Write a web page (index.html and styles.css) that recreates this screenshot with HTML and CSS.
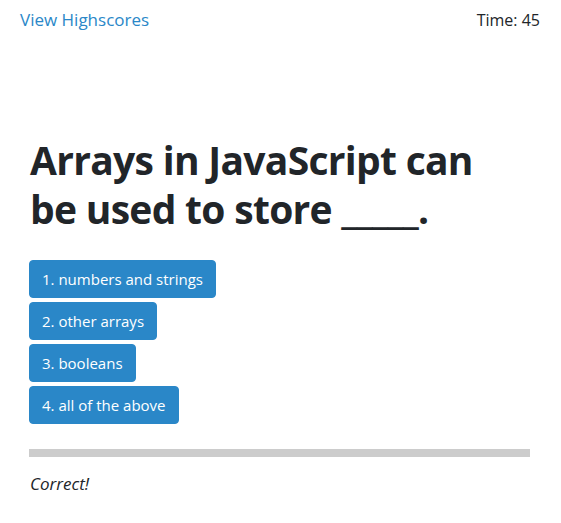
FILE: index.html
```html
<!DOCTYPE html>
<html>
<head>
<meta charset="utf-8">
<link rel="stylesheet" href="styles.css">
</head>
<body>
<header class="topbar">
  <a class="highscores" href="#">View Highscores</a>
  <span class="timer">Time: 45</span>
</header>
<main class="quiz">
  <h1 class="question">Arrays in JavaScript can be used to store _____.</h1>
  <div class="choices">
    <button class="choice">1. numbers and strings</button>
    <button class="choice">2. other arrays</button>
    <button class="choice">3. booleans</button>
    <button class="choice">4. all of the above</button>
  </div>
  <div class="feedback">
    <p class="result">Correct!</p>
  </div>
</main>
</body>
</html>
```

FILE: styles.css
```css
* { box-sizing: border-box; }
body {
  margin: 0;
  font-family: "Open Sans", "Noto Sans", sans-serif;
  font-size: 16px;
  line-height: 1.5;
  color: #212529;
  background: #fff;
}
.topbar {
  display: flex;
  justify-content: space-between;
  align-items: baseline;
  padding: 7px 21px 0 20px;
}
.highscores {
  color: #2a87c8;
  text-decoration: none;
  font-size: 17px;
}
.timer { color: #212529; }
.quiz {
  padding: 102px 31px 0 29px;
}
.question {
  max-width: 490px;
  margin: 0 0 27px 1px;
  font-size: 39px;
  line-height: 49px;
  font-weight: 700;
  letter-spacing: -0.7px;
}
.choices {
  display: flex;
  flex-direction: column;
  align-items: flex-start;
  gap: 4px;
}
.choice {
  font-family: inherit;
  font-size: 15px;
  line-height: 24px;
  padding: 6px 12px;
  border: 1px solid #2a87c8;
  background: #2a87c8;
  color: #fff;
  border-radius: 4px;
}
.feedback {
  margin-top: 25px;
  border-top: 8px solid #cccccc;
}
.result {
  margin: 14px 0 0 1px;
  font-size: 17px;
  font-style: italic;
}
```
